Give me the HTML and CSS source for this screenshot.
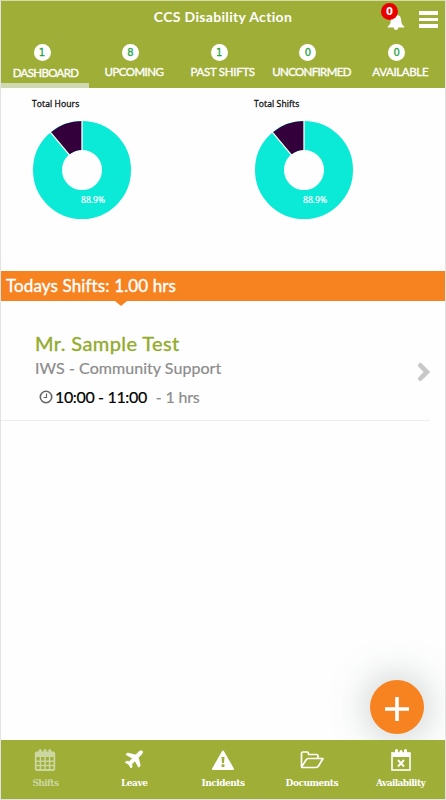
FILE: index.html
```html
<!DOCTYPE html>
<html lang="en">
<head>
<meta charset="utf-8">
<title>CCS Disability Action</title>
<link rel="stylesheet" href="styles.css">
</head>
<body>
<div class="app">
  <header class="header">
    <div class="titlebar">
      <h1 class="title">CCS Disability Action</h1>
      <div class="bell">
        <svg width="20" height="18" viewBox="0 0 20 18"><path d="M10 0.5c-1 0-1.5.7-1.5 1.4C5.8 2.6 4.800 4.600 4.800 7c0 3.500-1 5-3 6.500v1h6c.2 1.700 1 2.500 2.200 2.500s2-.8 2.200-2.500h6v-1c-2-1.500-3-3-3-6.500 0-2.400-1-4.400-3.700-5.100C11.500 1.200 11 .5 10 .5z" fill="#fff"/></svg>
        <span class="alert">0</span>
      </div>
      <div class="menu"><i></i><i></i><i></i></div>
    </div>
    <nav class="tabs">
      <a class="tab active"><b class="count">1</b><span class="t1">DASHBOARD</span></a>
      <a class="tab"><b class="count">8</b><span class="t2">UPCOMING</span></a>
      <a class="tab"><b class="count">1</b><span class="t3">PAST SHIFTS</span></a>
      <a class="tab"><b class="count">0</b><span class="t4">UNCONFIRMED</span></a>
      <a class="tab"><b class="count">0</b><span class="t5">AVAILABLE</span></a>
    </nav>
  </header>
  <section class="charts">
    <div class="chart">
      <h2>Total Hours</h2>
      <svg width="100" height="100" viewBox="-50 -50 100 100">
        <circle r="34.500" fill="none" stroke="#0aead6" stroke-width="29"/>
        <path d="M0-49A49 49 0 0 0-31.500-37.500L-12.900-15.300A20 20 0 0 1 0-20z" fill="#33003b"/>
        <path d="M0-50V-19M-32.100-38.300L-12.200-14.600" stroke="#fff" stroke-width="1.300"/>
        <text x="11" y="33">88.9%</text>
      </svg>
    </div>
    <div class="chart">
      <h2>Total Shifts</h2>
      <svg width="100" height="100" viewBox="-50 -50 100 100">
        <circle r="34.500" fill="none" stroke="#0aead6" stroke-width="29"/>
        <path d="M0-49A49 49 0 0 0-31.500-37.500L-12.900-15.300A20 20 0 0 1 0-20z" fill="#33003b"/>
        <path d="M0-50V-19M-32.100-38.300L-12.200-14.600" stroke="#fff" stroke-width="1.300"/>
        <text x="11" y="33">88.9%</text>
      </svg>
    </div>
  </section>
  <div class="banner">Todays Shifts: 1.00 hrs</div>
  <main class="list">
    <article class="shift">
      <div class="info">
        <h3>Mr. Sample Test</h3>
        <p class="service">IWS - Community Support</p>
        <p class="time">
          <svg width="14" height="14" viewBox="0 0 14 14" fill="none" stroke="#666"><circle cx="7" cy="7" r="5.700" stroke-width="1.600"/><path d="M7.500 3.500V7.500H4.500" stroke-width="1.200"/></svg>
          <span class="range">10:00 - 11:00</span><span class="dur">- 1 hrs</span>
        </p>
      </div>
      <svg class="chevron" width="14" height="20" viewBox="0 0 14 20"><path d="M3.300 3.300L10 10L3.300 16.700" fill="none" stroke="#c8c8c8" stroke-width="4.600" stroke-linecap="round"/></svg>
    </article>
  </main>
  <button class="fab" aria-label="Add"><svg width="26" height="26" viewBox="0 0 26 26"><path d="M13 1V25M1 13H25" stroke="#fff" stroke-width="3.600"/></svg></button>
  <footer class="footer">
    <a class="item dim">
      <svg width="22" height="24" viewBox="0 0 22 24" fill="none" stroke="currentColor"><rect x="1.700" y="4.500" width="18.600" height="17.500" rx="1" stroke-width="1.800"/><path d="M2 5H20V9H2z" fill="currentColor" stroke="none"/><path d="M6.400 9V22M11 9V22M15.600 9V22M2 13.200H20M2 17.500H20" stroke-width="1.500"/><path d="M6.200 2.500V6M11 2.500V6M15.800 2.500V6" stroke-width="3" stroke-linecap="round"/></svg>
      <span class="b1">Shifts</span></a>
    <a class="item">
      <svg width="22" height="24" viewBox="0 0 22 24"><path d="M19.300 3.200c-1.300-1-3 .1-4.200 1.300L12.700 7 4.500 5 3 6.500l6.500 3.800L6.300 13.600 3.500 13.200 2.300 14.400l3.600 2 2 3.600 1.200-1.200-.4-2.800 3.300-3.200 3.700 6.500 1.500-1.500-1.900-8.200 2.400-2.400c1.200-1.200 2.300-2.900 1.600-4z" fill="currentColor" stroke="currentColor" stroke-linejoin="round" stroke-width=".8"/></svg>
      <span class="b2">Leave</span></a>
    <a class="item">
      <svg width="24" height="24" viewBox="0 0 24 24"><path d="M12 3.500L22 21H2z" fill="currentColor" stroke="currentColor" stroke-width="2" stroke-linejoin="round"/><path d="M10.500 9h3l-.5 6h-2zM10.600 16.300h2.800v2.700h-2.800z" fill="#9fae37"/></svg>
      <span class="b3">Incidents</span></a>
    <a class="item">
      <svg width="24" height="24" viewBox="0 0 24 24" fill="none" stroke="currentColor" stroke-width="1.700" stroke-linejoin="round"><path d="M1.500 18.500V5.500Q1.500 4 3 4H7.200Q8.500 4 8.500 5.500V6.500H16.500Q18 6.500 18 8V10.500M1.700 18.800L6.200 11.700Q7 10.500 8.300 10.500H23L18.800 17.500Q17.700 19.500 16 19.500H2.500Q1.500 19.500 1.700 18.800z"/></svg>
      <span class="b4">Documents</span></a>
    <a class="item">
      <svg width="22" height="24" viewBox="0 0 22 24" fill="none" stroke="currentColor"><rect x="2" y="5" width="18" height="17" stroke-width="1.600"/><path d="M2 5H20V9H2z" fill="currentColor" stroke="none"/><path d="M6.500 2.500V6M15.500 2.500V6M11 3.500V6" stroke-width="3" stroke-linecap="round"/><path d="M8 12L14 18.500M14 12L8 18.500" stroke-width="1.900"/></svg>
      <span class="b5">Availability</span></a>
  </footer>
</div>
</body>
</html>
```
FILE: styles.css
```css
* { box-sizing: border-box; }
body { margin: 0; background: #fff; font-family: Lato, "Liberation Sans", sans-serif; }
h1, h2, h3, p { margin: 0; font-weight: normal; white-space: nowrap; }
svg { display: block; }
.app { position: relative; width: 446px; height: 800px; display: flex; flex-direction: column; border: 1px solid #e2e2e4; border-top-color: #d6dda8; background: #fefefe; overflow: hidden; }
.header { height: 87px; flex: none; background: #9fae37; color: #fff; }
.titlebar { position: relative; display: flex; height: 42px; justify-content: center; padding-top: 7px; }
.title { font-size: 14px; line-height: 18px; font-weight: 700; letter-spacing: .33px; }
.bell { position: absolute; left: 385px; top: 12px; }
.alert { position: absolute; left: -5px; top: -10px; width: 17px; height: 17px; border-radius: 50%; background: #e90000; font: 700 10px/17px "DejaVu Sans", sans-serif; text-align: center; }
.menu { position: absolute; right: 7px; top: 10px; width: 19px; display: grid; gap: 3px; }
.menu i { height: 3.600px; background: #fff; }
.tabs { display: flex; height: 45px; }
.tab { width: 88.800px; height: 45px; display: flex; flex-direction: column; align-items: center; font: 11.500px/14px Lato, sans-serif; white-space: nowrap; padding-right: 6px; }
.tab span { margin-top: 4px; margin-right: -7px; -webkit-text-stroke: .35px #fff; }
.tab.active span { margin-top: 5px; }
.tab.active { width: 88px; border-bottom: 5px solid #d0d8b1; }
.t1 { letter-spacing: -.65px; }
.t2 { letter-spacing: -.55px; }
.t3 { letter-spacing: -.3px; }
.t4 { letter-spacing: -.65px; }
.t5 { letter-spacing: -.35px; }
.count { flex: none; width: 17px; height: 17px; margin-top: 1px; border-radius: 50%; background: #fff; color: #2ba34a; font: 10px/17px "DejaVu Sans", sans-serif; text-align: center; -webkit-text-stroke: .3px #2ba34a; }
.charts { display: flex; height: 183px; flex: none; padding: 10px 0 0 31px; }
.chart { width: 222px; flex: none; }
.chart h2 { font: 8.500px/12px "Open Sans", sans-serif; letter-spacing: .12px; color: #111; -webkit-text-stroke: .3px #111; }
.chart svg { margin-top: 10px; }
.chart text { font: 8.500px "Open Sans", sans-serif; fill: #fff; stroke: #fff; stroke-width: .2px; text-anchor: middle; }
.banner { position: relative; height: 30px; flex: none; background: #f68220; color: #fff; font-size: 17px; line-height: 29px; letter-spacing: .12px; padding-left: 5px; -webkit-text-stroke: .4px #fff; }
.banner::after { content: ""; position: absolute; left: 114px; top: 30px; border: 6px solid transparent; border-top: 5px solid #f68220; border-bottom: 0; }
.list { flex: 1; padding-right: 15px; }
.shift { display: flex; justify-content: space-between; height: 120px; padding: 30px 0 0 34px; border-bottom: 1px solid #eee; }
.shift h3 { font-size: 20px; line-height: 25px; letter-spacing: .4px; color: #92ab2d; -webkit-text-stroke: .35px #92ab2d; }
.service { font-size: 16px; line-height: 23px; letter-spacing: .05px; color: #8c8c8c; -webkit-text-stroke: .2px #8c8c8c; }
.time { display: flex; align-items: center; height: 22px; margin-top: 7px; padding-left: 4px; font-size: 16px; line-height: 22px; }
.range { margin-left: 2px; color: #000; letter-spacing: -.35px; -webkit-text-stroke: .2px #000; }
.dur { margin-left: 9px; color: #8c8c8c; letter-spacing: -.2px; -webkit-text-stroke: .2px #8c8c8c; }
.chevron { margin: 31px -1px 0 0; }
.fab { position: absolute; left: 369px; top: 679px; width: 54px; height: 54px; padding: 0; border: 0; border-radius: 50%; background: #f68220; display: grid; place-items: center; box-shadow: 0 0 40px rgba(60, 90, 80, .36); }
.fab svg { margin-top: 4px; }
.footer { position: relative; display: flex; height: 59px; flex: none; background: #9fae37; color: #fff; }
.item { width: 88.800px; flex: none; display: flex; flex-direction: column; align-items: center; padding-top: 8px; font: 700 9px/14px "DejaVu Serif", serif; letter-spacing: -.5px; }
.item span { margin-top: 4px; }
.b1, .b5 { letter-spacing: -.6px; }
.dim { color: #ccd6a0; }
```
